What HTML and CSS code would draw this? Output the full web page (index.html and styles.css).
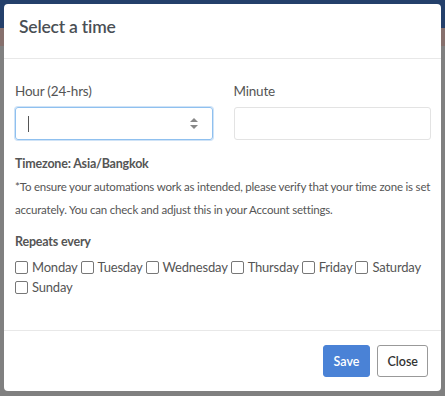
FILE: index.html
```html
<!DOCTYPE html>
<html lang="en">
<head>
  <meta charset="UTF-8" />
  <title>Select a time</title>
  <link rel="stylesheet" href="styles.css">
</head>
<body>
  <div class="modal">
    <div class="modal-header">
      <h4>Select a time</h4>
    </div>

    <div class="modal-body">
      <div class="row">
        <div class="field">
          <label>Hour (24-hrs)</label>
          <div class="input focused">
            <span class="caret"></span>
            <span class="spin"><i class="up"></i><i class="down"></i></span>
          </div>
        </div>
        <div class="field">
          <label>Minute</label>
          <div class="input"></div>
        </div>
      </div>

      <p class="tz">Timezone: Asia/Bangkok</p>
      <p class="note">*To ensure your automations work as intended, please verify that your time zone is set accurately. You can check and adjust this in your Account settings.</p>

      <p class="tz repeat">Repeats every</p>
      <div class="days">
        <label><span class="box"></span>Monday</label>
        <label><span class="box"></span>Tuesday</label>
        <label><span class="box"></span>Wednesday</label>
        <label><span class="box"></span>Thursday</label>
        <label><span class="box"></span>Friday</label>
        <label><span class="box"></span>Saturday</label>
        <label><span class="box"></span>Sunday</label>
      </div>
    </div>

    <div class="modal-footer">
      <button class="btn primary">Save</button>
      <button class="btn">Close</button>
    </div>
  </div>
</body>
</html>
```

FILE: styles.css
```css
body { margin:0; padding:4px 4px 0; font-family:Lato, "Open Sans", sans-serif; color:#555; height:392px; overflow:hidden;
  background:linear-gradient(#24406b 0, #24406b 28px, #86706d 28px, #86706d 46px, #808080 46px); }
.modal { width:437px; height:387px; background:#fff; border-radius:4px; display:flex; flex-direction:column; }
.modal-header { height:55px; box-sizing:border-box; padding:12px 15px 0; border-bottom:1px solid #e8e8e8; }
.modal-header h4 { margin:0; font-size:17.5px; font-weight:600; color:#4a4f55; letter-spacing:-0.2px; }
.modal-body { flex:1; padding:24px 10px 0 11px; }
.row { display:flex; gap:21px; }
.field { flex:1; }
.field label { display:block; font-size:13.5px; color:#555; margin-bottom:8px; letter-spacing:-0.2px; }
.input { height:33px; box-sizing:border-box; border:1px solid #e3e3e3; border-radius:3px; display:flex; align-items:center; padding:0 12px; }
.input.focused { border-color:#8fc0ef; box-shadow:0 0 0 1px #cfe3f7; }
.caret { width:1px; height:16px; background:#555; }
.spin { margin-left:auto; margin-right:2px; display:flex; flex-direction:column; gap:3px; }
.spin i { width:0; height:0; border-left:4px solid transparent; border-right:4px solid transparent; }
.spin .up { border-bottom:4px solid #888; }
.spin .down { border-top:4px solid #888; }
.tz { margin:16px 0 0; font-size:12.5px; font-weight:700; color:#555; letter-spacing:-0.2px; }
.note { margin:4px 0 0; font-size:11.5px; line-height:23px; color:#555; letter-spacing:-0.2px; }
.repeat { margin-top:13px; }
.days { margin-top:8px; display:flex; flex-wrap:wrap; font-size:13px; line-height:20px; letter-spacing:-0.2px; }
.days label { display:flex; align-items:center; margin-right:3px; }
.box { width:11px; height:11px; border:1px solid #777; border-radius:2px; margin-right:4px; }
.modal-footer { height:61px; box-sizing:border-box; border-top:1px solid #e8e8e8; display:flex; justify-content:flex-end; align-items:center; gap:7px; padding:0 13px; }
.btn { height:32px; padding:0 9px; font-family:inherit; font-size:12.5px; font-weight:600; border:1px solid #999; background:#fff; color:#333; border-radius:3px; }
.btn.primary { padding:0 10px; background:#4a82d6; border-color:#4a82d6; color:#fff; }
```
